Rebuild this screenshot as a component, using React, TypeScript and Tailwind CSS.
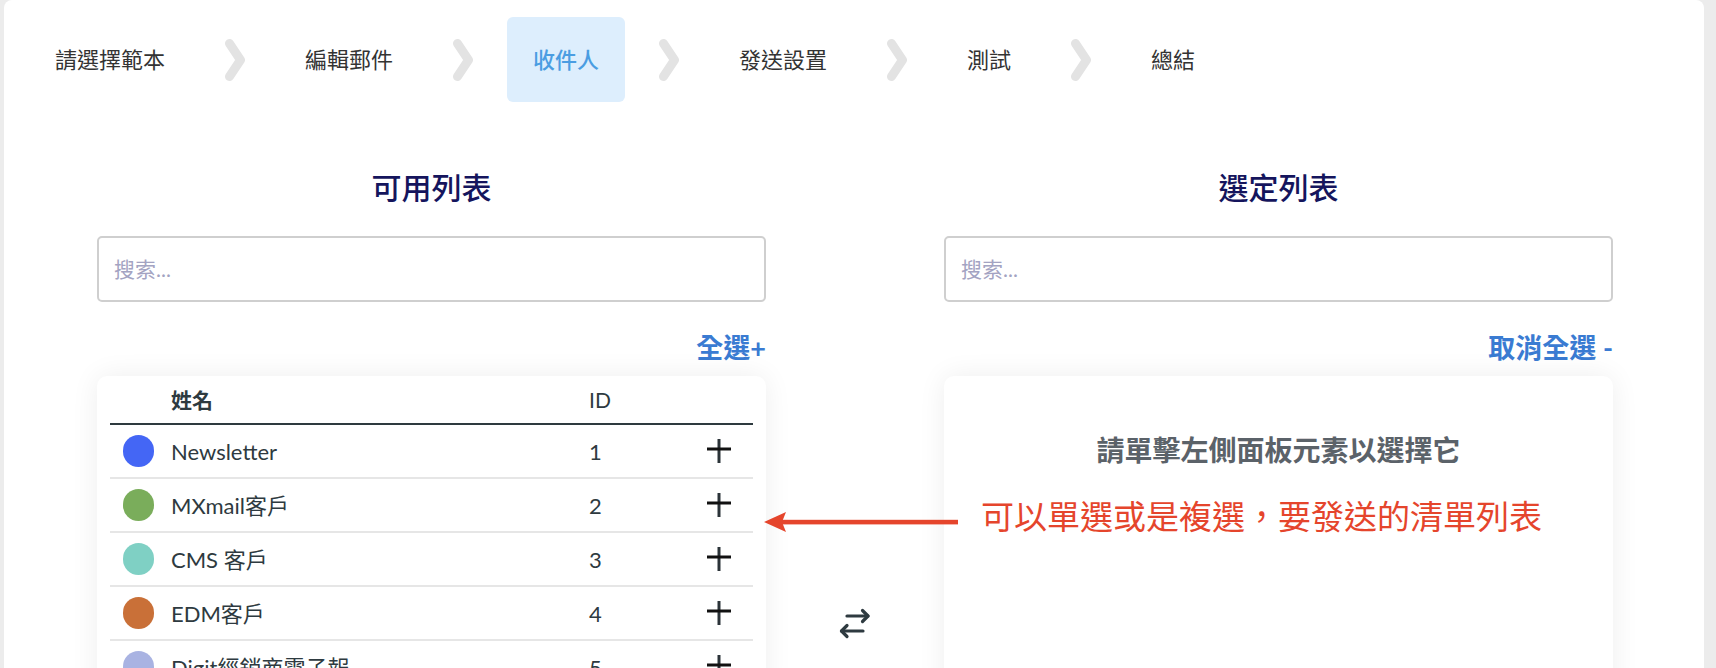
import React from "react";

const steps = ["請選擇範本", "編輯郵件", "收件人", "發送設置", "測試", "總結"];

const rows = [
  { name: "Newsletter", id: 1, color: "bg-[#4466f5]" },
  { name: "MXmail客戶", id: 2, color: "bg-[#7aad5b]" },
  { name: "CMS 客戶", id: 3, color: "bg-[#7fd0c4]" },
  { name: "EDM客戶", id: 4, color: "bg-[#c97038]" },
  { name: "Digit經銷商電子報", id: 5, color: "bg-[#a9b3e2]" },
];

function Chevron() {
  return (
    <svg width="22" height="44" viewBox="0 0 22 44" className="mx-[33px] shrink-0">
      <path d="M5.5 5.5 L16.5 22 L5.5 38.5" fill="none" stroke="#e3e3e3" strokeWidth="9" strokeLinecap="round" strokeLinejoin="round" />
    </svg>
  );
}

function PlusIcon() {
  return (
    <svg width="24" height="26" viewBox="0 0 24 26">
      <path d="M12 1 V25" stroke="#2b3338" strokeWidth="3" />
      <path d="M0 11 H24" stroke="#111111" strokeWidth="3" />
    </svg>
  );
}

function SwapIcon() {
  return (
    <svg width="34" height="34" viewBox="0 0 34 34">
      <g fill="none" stroke="#2e3a40" strokeWidth="3.2" strokeLinecap="round" strokeLinejoin="round">
        <path d="M9 10 H30" />
        <path d="M24.5 4.5 L30 10 L24.5 15.5" />
        <path d="M25 25 H3.5" />
        <path d="M9 19.5 L3.5 25 L9 30.5" />
      </g>
    </svg>
  );
}

export default function App() {
  return (
    <div className="relative h-[668px] w-[1716px] overflow-hidden bg-[#ececec] pl-[4px] font-['Lato','Noto_Sans_CJK_TC',sans-serif]">
      <div className="h-[668px] w-[1700px] rounded-t-[8px] bg-white">
        {/* steps */}
        <div className="flex items-center pl-[25px] pt-[17px]">
          {steps.map((s, i) => (
            <React.Fragment key={s}>
              {i > 0 && <Chevron />}
              <div
                className={
                  i === 2
                    ? "flex h-[85px] items-center rounded-[6px] bg-[#ddeefd] px-[26px] text-[22px] font-medium text-[#4a9de2]"
                    : "flex h-[85px] items-center px-[26px] text-[22px] text-[#333333]"
                }
              >
                {s}
              </div>
            </React.Fragment>
          ))}
        </div>

        {/* lists */}
        <div className="mt-[67px] flex pl-[93px]">
          {/* left */}
          <div className="flex w-[669px] flex-col">
            <h2 className="text-center text-[30px] font-medium leading-[36px] text-[#15155d]">可用列表</h2>
            <div className="mt-[31px] flex h-[66px] items-center rounded-[5px] border-2 border-[#cfcfcf] px-[15px] text-[21px] text-[#a3a3c2]">
              搜索...
            </div>
            <div className="mt-[30px] text-right text-[27px] font-bold leading-[32px] text-[#3a7bd2]">全選+</div>
            <div className="mt-[12px] h-[320px] rounded-[10px] bg-white px-[13px] shadow-[0_0_28px_rgba(0,0,0,0.07)]">
              <div className="flex h-[49px] items-center border-b-2 border-[#2e3a3f] text-[21px] font-semibold text-[#2e3a40]">
                <span className="ml-[61px] w-[418px]">姓名</span>
                <span className="font-normal">ID</span>
              </div>
              {rows.map((r) => (
                <div key={r.id} className="flex h-[54px] items-center border-b-2 border-[#e6e6e6] text-[22px] text-[#2e3a40]">
                  <span className={`ml-[13px] h-[32px] w-[31px] shrink-0 rounded-full ${r.color}`} />
                  <span className="ml-[17px] w-[418px]">{r.name}</span>
                  <span className="w-[118px]">{r.id}</span>
                  <PlusIcon />
                </div>
              ))}
            </div>
          </div>

          {/* middle */}
          <div className="flex w-[178px] justify-center pt-[437px]">
            <SwapIcon />
          </div>

          {/* right */}
          <div className="flex w-[669px] flex-col">
            <h2 className="text-center text-[30px] font-medium leading-[36px] text-[#15155d]">選定列表</h2>
            <div className="mt-[31px] flex h-[66px] items-center rounded-[5px] border-2 border-[#cfcfcf] px-[15px] text-[21px] text-[#a3a3c2]">
              搜索...
            </div>
            <div className="mt-[30px] text-right text-[27px] font-bold leading-[32px] text-[#3a7bd2]">取消全選 -</div>
            <div className="mt-[12px] h-[320px] rounded-[10px] bg-white pt-[56px] text-center shadow-[0_0_28px_rgba(0,0,0,0.07)]">
              <p className="text-[28px] font-semibold leading-[36px] text-[#5b6269]">請單擊左側面板元素以選擇它</p>
            </div>
          </div>
        </div>
      </div>

      {/* annotation */}
      <svg className="absolute left-[764px] top-[510px]" width="196" height="24" viewBox="0 0 196 24">
        <path d="M0 12 L22 2 L18 12 L22 22 Z" fill="#e5452c" />
        <rect x="16" y="9.8" width="178" height="4.6" fill="#e5452c" />
      </svg>
      <div className="absolute left-[981px] top-[496px] text-[33px] leading-[40px] text-[#e5452c]">
        可以單選或是複選，要發送的清單列表
      </div>
    </div>
  );
}
